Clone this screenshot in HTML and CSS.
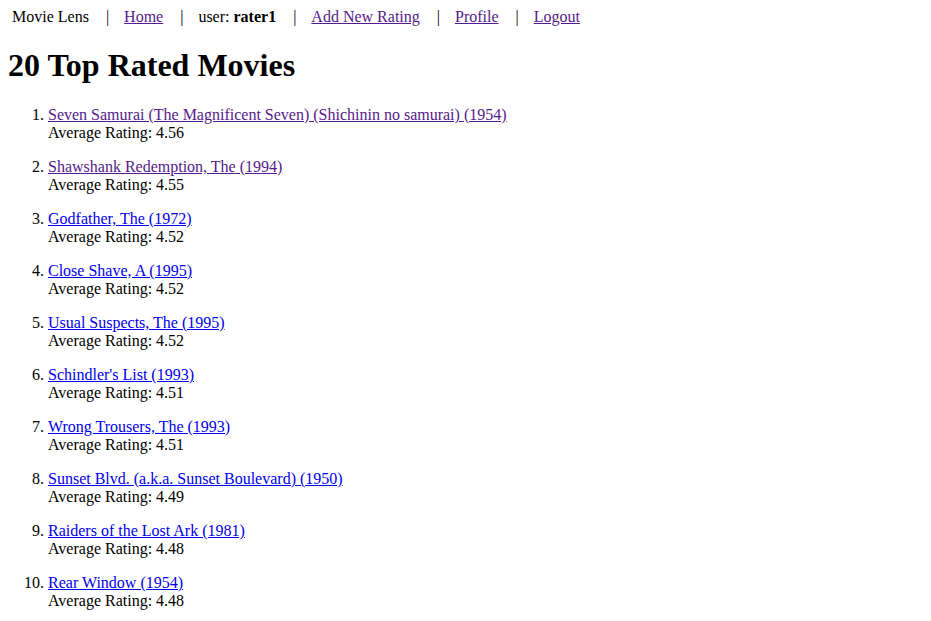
FILE: index.html
```html
<!DOCTYPE html>
<html>
<head>
<meta charset="utf-8">
<title>Movie Lens</title>
<link rel="stylesheet" href="styles.css">
</head>
<body>
<div class="nav">
  <span class="brand">Movie Lens</span>
  <span class="sep">|</span>
  <a class="visited" href="#">Home</a>
  <span class="sep">|</span>
  <span>user: <b>rater1</b></span>
  <span class="sep">|</span>
  <a class="visited" href="#">Add New Rating</a>
  <span class="sep">|</span>
  <a class="visited" href="#">Profile</a>
  <span class="sep">|</span>
  <a class="visited" href="#">Logout</a>
</div>
<h1 class="title">20 Top Rated Movies</h1>
<ol class="movies">
  <li><p><a class="visited" href="#">Seven Samurai (The Magnificent Seven) (Shichinin no samurai) (1954)</a><br>Average Rating: 4.56</p></li>
  <li><p><a class="visited" href="#">Shawshank Redemption, The (1994)</a><br>Average Rating: 4.55</p></li>
  <li><p><a href="#">Godfather, The (1972)</a><br>Average Rating: 4.52</p></li>
  <li><p><a href="#">Close Shave, A (1995)</a><br>Average Rating: 4.52</p></li>
  <li><p><a href="#">Usual Suspects, The (1995)</a><br>Average Rating: 4.52</p></li>
  <li><p><a href="#">Schindler's List (1993)</a><br>Average Rating: 4.51</p></li>
  <li><p><a href="#">Wrong Trousers, The (1993)</a><br>Average Rating: 4.51</p></li>
  <li><p><a href="#">Sunset Blvd. (a.k.a. Sunset Boulevard) (1950)</a><br>Average Rating: 4.49</p></li>
  <li><p><a href="#">Raiders of the Lost Ark (1981)</a><br>Average Rating: 4.48</p></li>
  <li><p><a href="#">Rear Window (1954)</a><br>Average Rating: 4.48</p></li>
</ol>
</body>
</html>
```
FILE: styles.css
```css
body {
  margin: 8px;
  font-family: "Liberation Serif", "Times New Roman", serif;
  font-size: 16px;
  color: #000;
  background: #fff;
}
a {
  color: #0000ee;
}
a.visited {
  color: #551a8b;
}
.nav {
  display: flex;
  align-items: baseline;
  padding: 0 4px;
  white-space: nowrap;
}
.sep {
  margin: 0 15px 0 17px;
}
.title {
  font-size: 32px;
  font-weight: bold;
  margin: 21.44px 0;
}
.movies {
  margin: 16px 0;
  padding-left: 40px;
}
.movies p {
  margin: 16px 0;
}
```
